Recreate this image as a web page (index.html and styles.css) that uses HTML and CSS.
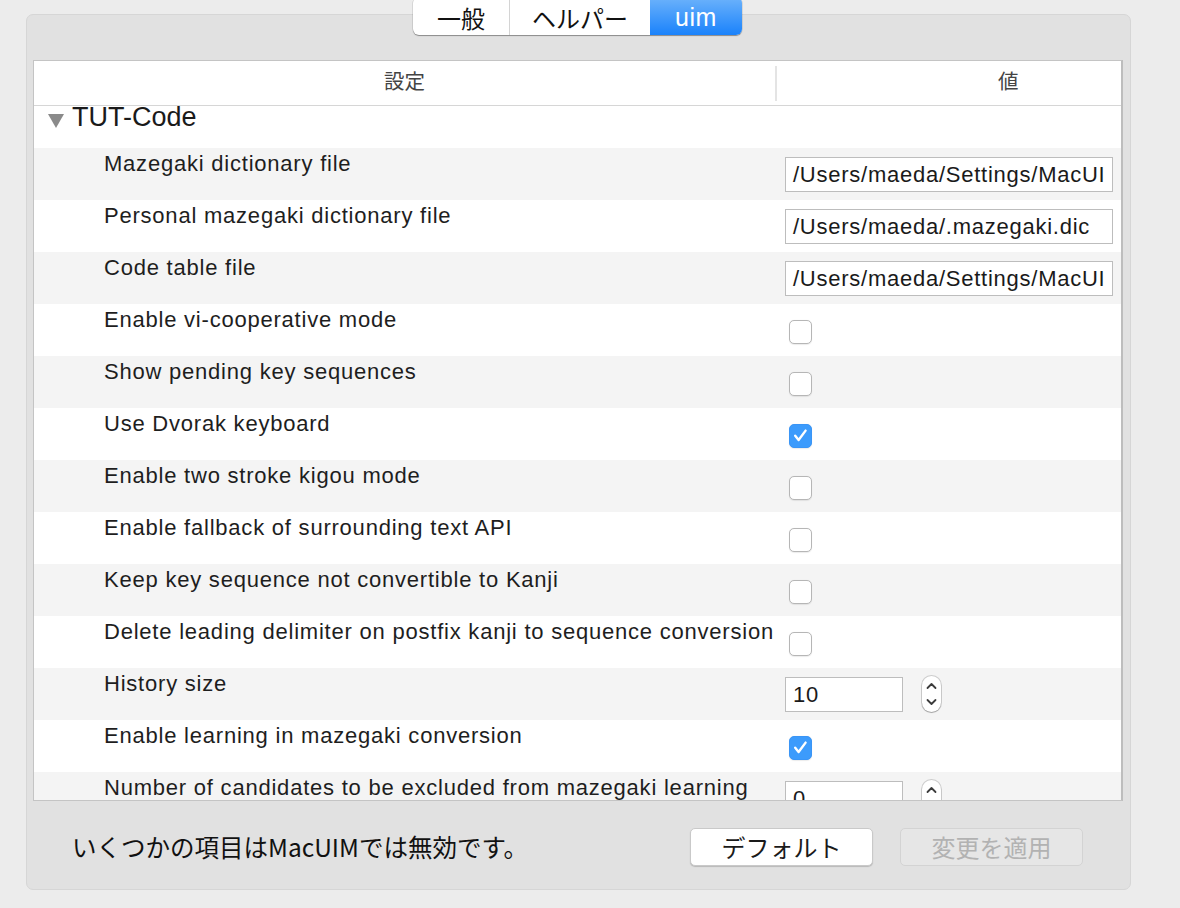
FILE: index.html
```html
<!DOCTYPE html>
<html lang="ja">
<head>
<meta charset="utf-8">
<title>uim</title>
<link rel="stylesheet" href="styles.css">
</head>
<body>
<div class="panel">
  <div class="tabs">
    <div class="seg seg-general">一般</div>
    <div class="seg seg-helper">ヘルパー</div>
    <div class="seg seg-uim active">uim</div>
  </div>

  <div class="table">
    <div class="thead">
      <div class="th th-name">設定</div>
      <div class="th-sep"></div>
      <div class="th th-value">値</div>
    </div>
    <div class="tbody">
      <div class="group-row"><span class="disclosure"></span><span class="group-label">TUT-Code</span></div>

      <div class="row alt">
        <div class="label">Mazegaki dictionary file</div>
        <div class="value"><div class="field">/Users/maeda/Settings/MacUI</div></div>
      </div>
      <div class="row">
        <div class="label">Personal mazegaki dictionary file</div>
        <div class="value"><div class="field">/Users/maeda/.mazegaki.dic</div></div>
      </div>
      <div class="row alt">
        <div class="label">Code table file</div>
        <div class="value"><div class="field">/Users/maeda/Settings/MacUI</div></div>
      </div>
      <div class="row">
        <div class="label">Enable vi-cooperative mode</div>
        <div class="value"><span class="checkbox"></span></div>
      </div>
      <div class="row alt">
        <div class="label">Show pending key sequences</div>
        <div class="value"><span class="checkbox"></span></div>
      </div>
      <div class="row">
        <div class="label">Use Dvorak keyboard</div>
        <div class="value"><span class="checkbox checked"><svg viewBox="0 0 23 23" width="23" height="23"><path d="M6.2 11.8 L9.6 16 L16.6 6.6" fill="none" stroke="#fff" stroke-width="2.4" stroke-linecap="round" stroke-linejoin="round"/></svg></span></div>
      </div>
      <div class="row alt">
        <div class="label">Enable two stroke kigou mode</div>
        <div class="value"><span class="checkbox"></span></div>
      </div>
      <div class="row">
        <div class="label">Enable fallback of surrounding text API</div>
        <div class="value"><span class="checkbox"></span></div>
      </div>
      <div class="row alt">
        <div class="label">Keep key sequence not convertible to Kanji</div>
        <div class="value"><span class="checkbox"></span></div>
      </div>
      <div class="row">
        <div class="label">Delete leading delimiter on postfix kanji to sequence conversion</div>
        <div class="value"><span class="checkbox"></span></div>
      </div>
      <div class="row alt">
        <div class="label">History size</div>
        <div class="value">
          <div class="field number">10</div>
          <span class="stepper"><svg viewBox="0 0 19 36" width="19" height="36"><path d="M5.5 12 L9.5 8 L13.5 12" fill="none" stroke="#3c3c3c" stroke-width="1.8" stroke-linecap="round" stroke-linejoin="round"/><path d="M5.5 24 L9.5 28 L13.5 24" fill="none" stroke="#3c3c3c" stroke-width="1.8" stroke-linecap="round" stroke-linejoin="round"/></svg></span>
        </div>
      </div>
      <div class="row">
        <div class="label">Enable learning in mazegaki conversion</div>
        <div class="value"><span class="checkbox checked"><svg viewBox="0 0 23 23" width="23" height="23"><path d="M6.2 11.8 L9.6 16 L16.6 6.6" fill="none" stroke="#fff" stroke-width="2.4" stroke-linecap="round" stroke-linejoin="round"/></svg></span></div>
      </div>
      <div class="row alt">
        <div class="label">Number of candidates to be excluded from mazegaki learning</div>
        <div class="value">
          <div class="field number">0</div>
          <span class="stepper"><svg viewBox="0 0 19 36" width="19" height="36"><path d="M5.5 12 L9.5 8 L13.5 12" fill="none" stroke="#3c3c3c" stroke-width="1.8" stroke-linecap="round" stroke-linejoin="round"/><path d="M5.5 24 L9.5 28 L13.5 24" fill="none" stroke="#3c3c3c" stroke-width="1.8" stroke-linecap="round" stroke-linejoin="round"/></svg></span>
        </div>
      </div>
    </div>
  </div>

  <div class="footer">
    <div class="note">いくつかの項目はMacUIMでは無効です。</div>
    <div class="buttons">
      <button class="btn">デフォルト</button>
      <button class="btn" disabled>変更を適用</button>
    </div>
  </div>
</div>
</body>
</html>
```

FILE: styles.css
```css
html, body {
  margin: 0;
  padding: 0;
}
body {
  background: #ececec;
  width: 1180px;
  height: 908px;
  overflow: hidden;
  font-family: "Liberation Sans", Arial, sans-serif;
  color: #1e1e1e;
}

.panel {
  position: relative;
  box-sizing: border-box;
  margin: 14px 0 0 26px;
  width: 1105px;
  height: 876px;
  background: #e1e1e1;
  border: 1px solid #d6d6d6;
  border-radius: 7px;
  display: flex;
  flex-direction: column;
}

/* segmented tab control */
.tabs {
  position: absolute;
  left: 386px;
  top: -18px;
  height: 38px;
  display: flex;
  background: #fff;
  border-radius: 6px;
  box-shadow: 0 1px 1px rgba(0, 0, 0, 0.35), 0 0 0 0.5px rgba(0, 0, 0, 0.12);
  overflow: hidden;
}
.seg {
  display: flex;
  align-items: center;
  justify-content: center;
  font-family: "Noto Sans CJK JP", sans-serif;
  font-size: 24px;
  color: #111;
  padding-top: 2px;
  box-sizing: border-box;
}
.seg-general { width: 97px; border-right: 1px solid #d4d4d4; }
.seg-helper { width: 140px; }
.seg-uim { width: 92px; }
.seg.active {
  background: linear-gradient(#6db3fb, #1a82fb);
  color: #fff;
  font-family: "Liberation Sans", Arial, sans-serif;
  font-size: 25px;
  letter-spacing: 0.5px;
}

/* table */
.table {
  margin: 45px 0 0 6px;
  width: 1090px;
  height: 741px;
  box-sizing: border-box;
  border: 1px solid #c4c4c4;
  border-right: 2px solid #bdbdbd;
  background: #fff;
  display: flex;
  flex-direction: column;
  overflow: hidden;
}
.thead {
  flex: none;
  height: 44px;
  border-bottom: 1px solid #d6d6d6;
  display: grid;
  grid-template-columns: 741px 2px 1fr;
  align-items: center;
}
.th {
  align-self: start;
  font-family: "Noto Sans CJK JP", sans-serif;
  font-size: 20.5px;
  color: #444;
  line-height: 39px;
}
.th-name {
  text-align: center;
}
.th-sep {
  height: 35px;
  background: #e4e4e4;
}
.th-value {
  padding-left: 221px;
}

.tbody {
  flex: none;
}

.group-row {
  height: 42px;
  display: flex;
  align-items: flex-start;
  padding-left: 14px;
}
.disclosure {
  width: 0;
  height: 0;
  margin-top: 8px;
  border-left: 8.5px solid transparent;
  border-right: 8.5px solid transparent;
  border-top: 14px solid #8a8a8a;
}
.group-label {
  margin-left: 8px;
  font-size: 27px;
  line-height: 22px;
  color: #1a1a1a;
}

.row {
  height: 52px;
  display: grid;
  grid-template-columns: 751px 1fr;
  align-items: start;
  background: #fff;
}
.row.alt {
  background: #f4f4f4;
}
.label {
  padding: 3px 0 0 70px;
  font-size: 22px;
  letter-spacing: 0.78px;
  line-height: 26px;
  white-space: nowrap;
  color: #1e1e1e;
}
.value {
  display: flex;
  align-items: flex-start;
}

.field {
  margin-top: 9px;
  width: 328px;
  height: 35px;
  box-sizing: border-box;
  border: 1px solid #bdbdbd;
  background: #fff;
  padding: 0 7px;
  font-size: 22px;
  letter-spacing: 0.75px;
  line-height: 33px;
  white-space: nowrap;
  overflow: hidden;
  color: #1a1a1a;
}
.field.number {
  width: 118px;
}

.checkbox {
  margin: 16px 0 0 4px;
  width: 23px;
  height: 24px;
  box-sizing: border-box;
  border: 1px solid #b6b6b6;
  border-radius: 5px;
  background: #fff;
  box-shadow: 0 0.5px 1px rgba(0, 0, 0, 0.08);
  display: block;
}
.checkbox.checked {
  background: #3c9bfc;
  border-color: #3a95f6;
}
.checkbox svg {
  display: block;
  margin: -1px 0 0 -1px;
}

.stepper {
  margin: 8px 0 0 19px;
  width: 19px;
  height: 36px;
  box-sizing: border-box;
  border-radius: 10px;
  background: #fff;
  box-shadow: 0 0 0 1px rgba(0, 0, 0, 0.16), 0 1px 1px rgba(0, 0, 0, 0.2);
  display: block;
}
.stepper svg {
  display: block;
}

/* footer */
.footer {
  flex: 1;
  display: flex;
  align-items: flex-start;
  padding: 27px 47px 0 45px;
}
.note {
  font-family: "Noto Sans CJK JP", sans-serif;
  font-size: 24.5px;
  line-height: 38px;
  color: #111;
}
.buttons {
  margin-left: auto;
  display: flex;
  gap: 27px;
}
.btn {
  width: 183px;
  height: 38px;
  box-sizing: border-box;
  border: 1px solid #c9c9c9;
  border-radius: 5px;
  background: #fff;
  box-shadow: 0 1px 1px rgba(0, 0, 0, 0.18);
  font-family: "Noto Sans CJK JP", sans-serif;
  font-size: 24px;
  line-height: 34px;
  color: #1a1a1a;
  padding: 0;
}
.btn:disabled {
  background: #e6e6e6;
  border-color: #d3d3d3;
  box-shadow: none;
  color: #b2b2b2;
}
```
